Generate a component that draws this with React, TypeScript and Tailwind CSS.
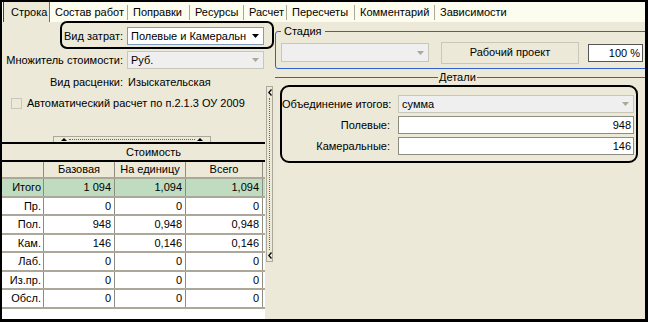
const tabs = [
  { label: 'Состав работ', w: 'w-[77px]' },
  { label: 'Поправки', w: 'w-[61px]' },
  { label: 'Ресурсы', w: 'w-[53px]' },
  { label: 'Расчет', w: 'w-[42px]' },
  { label: 'Пересчеты', w: 'w-[67px]' },
  { label: 'Комментарий', w: 'w-[79px]' },
  { label: 'Зависимости', w: 'w-[80px]' },
];

const rows = [
  { name: 'Пр.', base: '0', unit: '0', total: '0' },
  { name: 'Пол.', base: '948', unit: '0,948', total: '0,948' },
  { name: 'Кам.', base: '146', unit: '0,146', total: '0,146' },
  { name: 'Лаб.', base: '0', unit: '0', total: '0' },
  { name: 'Из.пр.', base: '0', unit: '0', total: '0' },
  { name: 'Обсл.', base: '0', unit: '0', total: '0' },
];

// стрелка комбобокса
function Arrow({ disabled = false }: { disabled?: boolean }) {
  return (
    <svg width="7" height="4" viewBox="0 0 7 4" className="shrink-0">
      <path d="M0 0h7L3.5 4z" fill={disabled ? '#aca899' : '#000'} />
    </svg>
  );
}

function Combo({ text, disabled = false, className = '' }: { text: string; disabled?: boolean; className?: string }) {
  return (
    <div
      className={`flex items-center h-[18px] border ${
        disabled ? 'bg-[#efefef] border-[#c9c7ba]' : 'bg-white border-[#7f9db9]'
      } ${className}`}
    >
      <span className="flex-1 pl-[3px] whitespace-nowrap overflow-hidden">{text}</span>
      <div className="w-[16px] h-full flex items-center justify-center">
        <Arrow disabled={disabled} />
      </div>
    </div>
  );
}

function Row({ name, base, unit, total, green = false }: { name: string; base: string; unit: string; total: string; green?: boolean }) {
  return (
    <div className={`flex h-[18.5px] border-b-2 border-[#aca899] ${green ? 'bg-[#c0dcc0]' : 'bg-white'}`}>
      <div className="w-[42px] border-r border-[#8f8d80] text-right pr-[2px] leading-[16px]">{name}</div>
      <div className="w-[71px] border-r border-[#8f8d80] text-right pr-[3px] leading-[16px]">{base}</div>
      <div className="w-[71px] border-r border-[#8f8d80] text-right pr-[3px] leading-[16px]">{unit}</div>
      <div className="w-[77px] border-r border-[#8f8d80] text-right pr-[3px] leading-[16px]">{total}</div>
    </div>
  );
}

export default function App() {
  return (
    <div className="w-[648px] h-[322px] bg-black pl-[2px] pt-[2px] pr-[3px] pb-[3px] font-['Liberation_Sans',Arial,sans-serif] text-[11px] text-black">
      <div className="flex flex-col h-full bg-[#ece9d8] overflow-hidden">
        {/* Вкладки */}
        <div className="flex items-stretch h-[20px] bg-[#fcfcef] shrink-0">
          <div className="ml-[1px] w-[47px] bg-[#ece9d8] border-l border-l-[#404040] border-r border-r-[#716f64] flex items-center pl-[7px]">
            Строка
          </div>
          {tabs.map((t, i) => (
            <div key={t.label} className="flex items-center">
              <div className={`${t.w} pl-[5px] whitespace-nowrap`}>{t.label}</div>
              {i < tabs.length - 1 && <span className="w-px h-[15px] bg-[#aca899]" />}
            </div>
          ))}
        </div>

        <div className="relative flex flex-1 min-h-0">
          {/* Левая панель */}
          <div className="w-[263px] flex flex-col shrink-0">
            <div className="flex items-center mt-[5px]">
              <span className="w-[123px] text-right pr-[2px]">Вид затрат:</span>
              <Combo text="Полевые и Камеральн" className="w-[137px] ml-[2px]" />
            </div>
            <div className="flex items-center mt-[6px]">
              <span className="w-[123px] text-right pr-[2px]">Множитель стоимости:</span>
              <Combo text="Руб." disabled className="w-[137px] ml-[2px]" />
            </div>
            <div className="flex items-center mt-[7px] h-[12px]">
              <span className="w-[123px] text-right pr-[2px]">Вид расценки:</span>
              <span className="ml-[3px]">Изыскательская</span>
            </div>
            <div className="flex items-center mt-[9px] h-[12px]">
              <span className="ml-[9px] w-[11px] h-[11px] border border-[#c9c7ba] bg-[#ece9d8]" />
              <span className="ml-[5px]">Автоматический расчет по п.2.1.3 ОУ 2009</span>
            </div>

            {/* Сворачиватель */}
            <div className="mt-[27px] ml-[51px] w-[158px] h-[6px] border border-b-0 border-[#aca899] flex items-center px-[7px] gap-[2px]">
              <svg width="6" height="3" viewBox="0 0 6 3"><path d="M0 3L3 0l3 3z" fill="#000" /></svg>
              <span className="flex-1 border-t border-dotted border-[#3b66c9]" />
              <svg width="6" height="3" viewBox="0 0 6 3"><path d="M0 3L3 0l3 3z" fill="#000" /></svg>
            </div>

            {/* Таблица стоимости */}
            <div className="flex-1 bg-white">
              <div className="h-[2px] bg-black" />
              <div className="h-[16px] bg-[#ece9d8] flex items-center">
                <span className="ml-[42px] w-[219px] text-center">Стоимость</span>
              </div>
              <div className="h-[2px] bg-black" />
              <div className="flex h-[17px] bg-[#ece9d8] border-b-2 border-[#aca899]">
                <div className="w-[42px] border-r border-[#8f8d80]" />
                <div className="w-[71px] border-r border-[#8f8d80] text-center leading-[15px]">Базовая</div>
                <div className="w-[71px] border-r border-[#8f8d80] text-center leading-[15px]">На единицу</div>
                <div className="w-[77px] border-r border-[#8f8d80] text-center leading-[15px]">Всего</div>
              </div>
              <Row name="Итого" base="1 094" unit="1,094" total="1,094" green />
              {rows.map((r) => (
                <Row key={r.name} {...r} />
              ))}
            </div>
          </div>

          {/* Разделитель */}
          <div className="w-[9px] shrink-0 flex justify-center pt-[64px] pb-[57px]">
            <div className="w-[7px] h-full border border-[#aca899] flex flex-col items-center py-[2px]">
              <svg width="4" height="7" viewBox="0 0 4 7"><path d="M3.5 0.5L0.8 3.5l2.7 3" stroke="#000" strokeWidth="1.3" fill="none" /></svg>
              <span className="flex-1 border-l border-dotted border-[#3b66c9] my-[2px]" />
              <svg width="4" height="7" viewBox="0 0 4 7"><path d="M3.5 0.5L0.8 3.5l2.7 3" stroke="#000" strokeWidth="1.3" fill="none" /></svg>
            </div>
          </div>

          {/* Правая панель */}
          <div className="flex-1 flex flex-col">
            <div className="relative mt-[9px] ml-px -mr-[6px] h-[38px] border border-[#2d62d0] rounded-[3px] flex items-center pl-[5px]">
              <span className="absolute -top-[7px] left-[5px] px-[3px] bg-[#ece9d8] leading-[13px]">Стадия</span>
              <Combo text="" disabled className="w-[148px] h-[19px] mt-[5px]" />
              <div className="ml-[12px] mt-[5px] w-[138px] h-[22px] border border-[#c9c7ba] flex items-center justify-center">
                Рабочий проект
              </div>
              <div className="ml-[9px] mt-[5px] w-[55px] h-[18px] bg-white border border-[#555] text-right pr-[2px] leading-[16px]">
                100 %
              </div>
            </div>

            <div className="flex items-center mt-[7px] ml-px h-[2px]">
              <span className="w-[163px] h-px bg-[#2d62d0]" />
              <span className="px-[1px] leading-[12px]">Детали</span>
              <span className="flex-1 h-px bg-[#2d62d0]" />
            </div>

            <div className="mt-[7px] ml-[6px] w-[358px] h-[78px] border-2 border-black rounded-[9px] flex flex-col pt-[8px] gap-[3px]">
              <div className="flex items-center">
                <span className="w-[108px] whitespace-nowrap">Объединение итогов:</span>
                <Combo text="сумма" disabled className="ml-[8px] w-[236px] h-[17px]" />
              </div>
              <div className="flex items-center">
                <span className="w-[108px] text-right">Полевые:</span>
                <div className="ml-[8px] w-[236px] h-[18px] bg-white border border-[#8e8c80] text-right pr-[2px] leading-[16px]">948</div>
              </div>
              <div className="flex items-center">
                <span className="w-[108px] text-right">Камеральные:</span>
                <div className="ml-[8px] w-[236px] h-[18px] bg-white border border-[#8e8c80] text-right pr-[2px] leading-[16px]">146</div>
              </div>
            </div>
          </div>

          {/* Выделение поля "Вид затрат" */}
          <div className="absolute left-[58px] -top-[1px] w-[214px] h-[28px] border-2 border-black rounded-[7px] pointer-events-none" />
        </div>
      </div>
    </div>
  );
}
